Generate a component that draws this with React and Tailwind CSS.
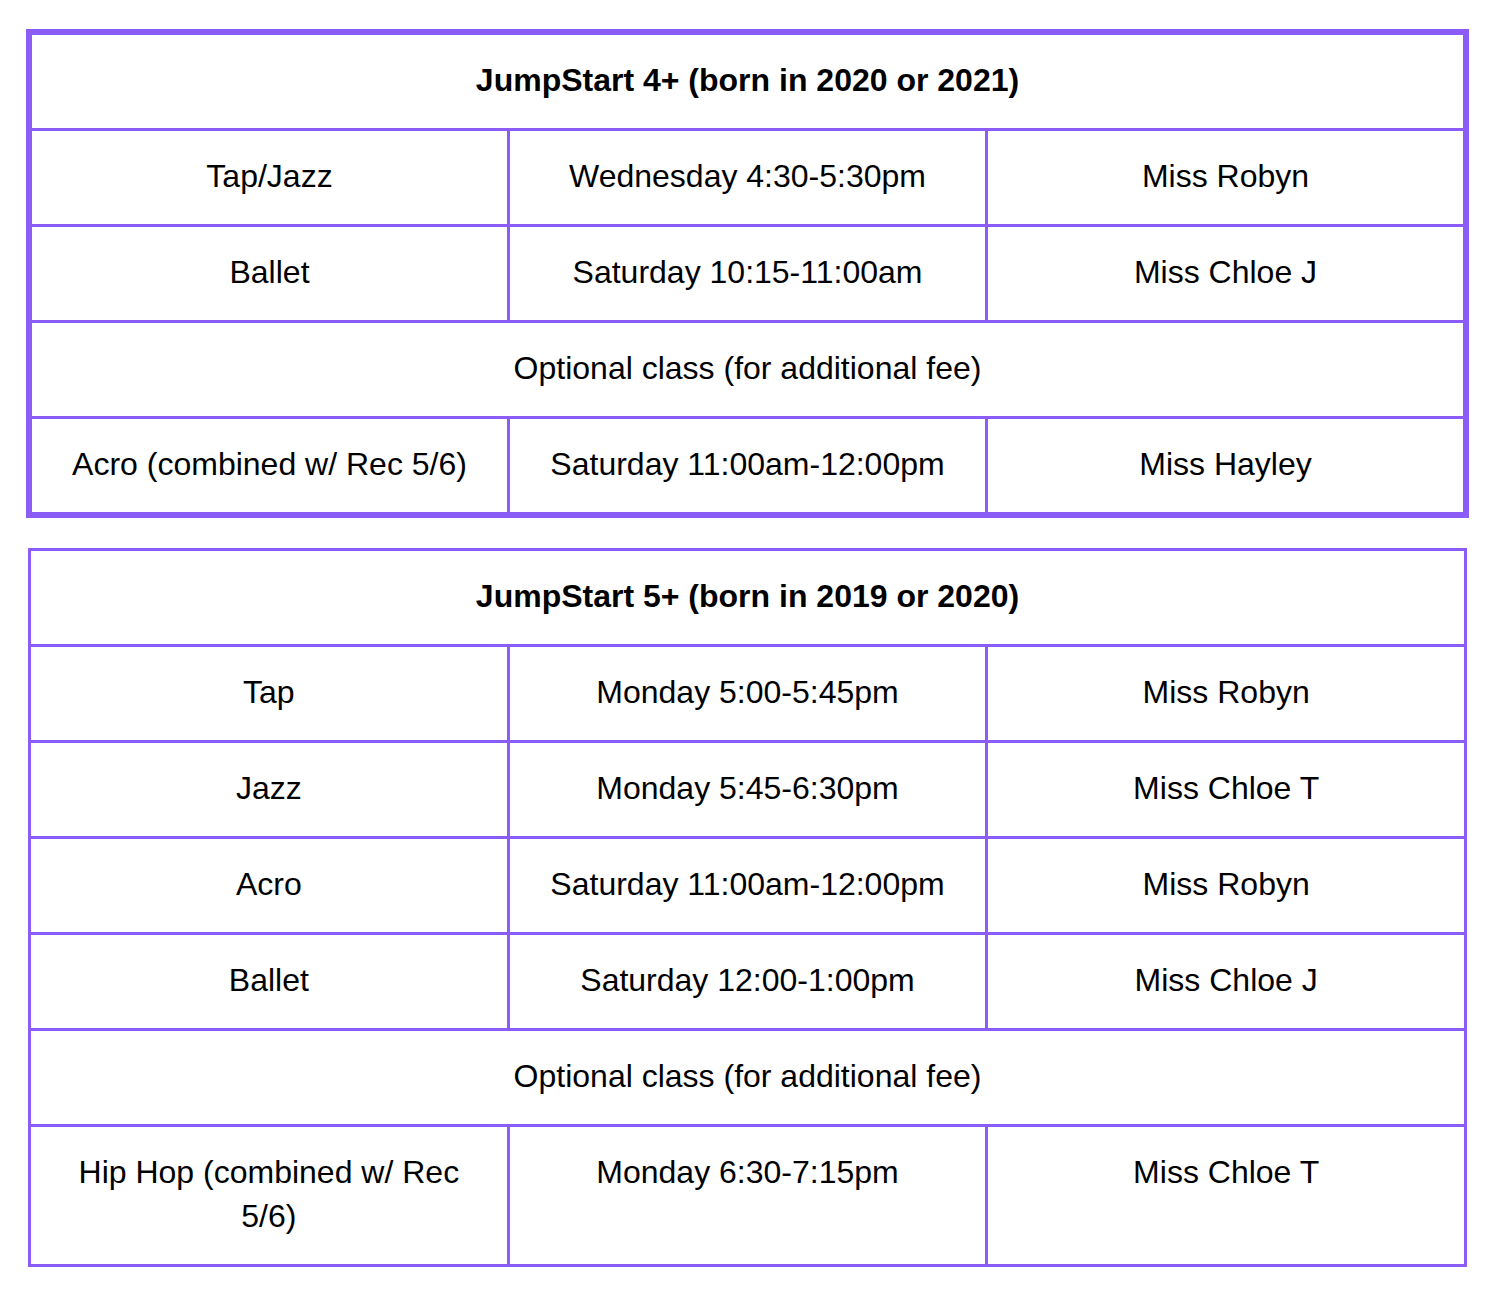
import React from "react";

const tables = [
  {
    title: "JumpStart 4+ (born in 2020 or 2021)",
    thick: true,
    rows: [
      ["Tap/Jazz", "Wednesday 4:30-5:30pm", "Miss Robyn"],
      ["Ballet", "Saturday 10:15-11:00am", "Miss Chloe J"],
      "Optional class (for additional fee)",
      ["Acro (combined w/ Rec 5/6)", "Saturday 11:00am-12:00pm", "Miss Hayley"],
    ],
  },
  {
    title: "JumpStart 5+ (born in 2019 or 2020)",
    thick: false,
    rows: [
      ["Tap", "Monday 5:00-5:45pm", "Miss Robyn"],
      ["Jazz", "Monday 5:45-6:30pm", "Miss Chloe T"],
      ["Acro", "Saturday 11:00am-12:00pm", "Miss Robyn"],
      ["Ballet", "Saturday 12:00-1:00pm", "Miss Chloe J"],
      "Optional class (for additional fee)",
      ["Hip Hop (combined w/ Rec 5/6)", "Monday 6:30-7:15pm", "Miss Chloe T"],
    ],
  },
];

function Cell({ children, last, bold }) {
  return (
    <div
      className={`flex-1 basis-0 min-w-0 px-6 pt-[23px] pb-[26px] text-center leading-[44px] ${
        last ? "" : "border-r-[3px] border-[#8b5cf6]"
      } ${bold ? "font-bold" : ""}`}
    >
      {children}
    </div>
  );
}

function ScheduleTable({ title, thick, rows }) {
  return (
    <div
      className={
        thick
          ? "ml-[26px] w-[1443px] border-[6px] border-[#8b5cf6]"
          : "ml-[28px] w-[1439px] border-[3px] border-[#8b5cf6]"
      }
    >
      <div className="flex border-b-[3px] border-[#8b5cf6]">
        <Cell last bold>
          {title}
        </Cell>
      </div>
      {rows.map((row, i) => {
        const lastRow = i === rows.length - 1;
        return (
          <div
            key={i}
            className={`flex ${lastRow ? "" : "border-b-[3px] border-[#8b5cf6]"}`}
          >
            {typeof row === "string" ? (
              <Cell last>{row}</Cell>
            ) : (
              row.map((c, j) => (
                <Cell key={j} last={j === row.length - 1}>
                  {c}
                </Cell>
              ))
            )}
          </div>
        );
      })}
    </div>
  );
}

export default function App() {
  return (
    <div className="min-h-screen bg-white pt-[29px] pb-6 text-[32px] text-black font-['Liberation_Sans',Arial,sans-serif]">
      <div className="flex flex-col gap-[30px]">
        {tables.map((t) => (
          <ScheduleTable key={t.title} {...t} />
        ))}
      </div>
    </div>
  );
}
